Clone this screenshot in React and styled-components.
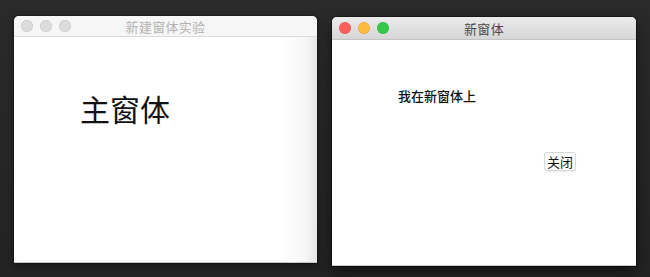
import React from 'react'
import styled, { createGlobalStyle } from 'styled-components'

const Global = createGlobalStyle`
    html, body {
        margin: 0;
        padding: 0;
        background: #262626;
        font-family: "Noto Sans CJK SC", "Liberation Sans", sans-serif;
    }
`

const Desktop = styled.div`
    display: flex;
    align-items: flex-start;
    gap: 15px;
    width: 650px;
    height: 277px;
    padding: 16px 0 0 14px;
    box-sizing: border-box;
    background: linear-gradient(180deg, #2a2a2a 0%, #232323 100%);
    overflow: hidden;
`

const Window = styled.div`
    display: flex;
    flex-direction: column;
    width: ${p => p.$w}px;
    height: ${p => p.$h}px;
    margin-top: ${p => p.$top || 0}px;
    border-radius: 5px 5px 0 0;
    overflow: hidden;
    background: #fff;
    box-shadow: ${p => p.$active
        ? '0 6px 14px rgba(0,0,0,0.55), 0 0 0 1px rgba(0,0,0,0.35)'
        : '0 3px 8px rgba(0,0,0,0.35), 0 0 0 1px rgba(0,0,0,0.25)'};
`

const TitleBar = styled.div`
    position: relative;
    display: flex;
    align-items: center;
    justify-content: center;
    height: ${p => p.$h}px;
    flex-shrink: 0;
    background: ${p => p.$active
        ? 'linear-gradient(180deg, #ebebeb 0%, #d6d6d6 100%)'
        : '#f6f6f6'};
    border-bottom: 1px solid ${p => p.$active ? '#c4c4c4' : '#dcdcdc'};
`

const Lights = styled.div`
    position: absolute;
    left: 7px;
    top: 0;
    bottom: 0;
    display: flex;
    align-items: center;
    gap: 7px;
`

const Light = styled.span`
    width: 12px;
    height: 12px;
    border-radius: 50%;
    background: ${p => p.$color};
    box-shadow: inset 0 0 0 0.5px rgba(0,0,0,0.12);
`

const Title = styled.span`
    font-size: 13px;
    color: ${p => p.$active ? '#4a4a4a' : '#b3b3b3'};
    letter-spacing: 0.3px;
`

const Content = styled.div`
    flex: 1;
    position: relative;
    padding: ${p => p.$pad};
    background: ${p => p.$inactive
        ? 'linear-gradient(90deg, #fff 0%, #fff 88%, #f7f7f7 96%, #e8e8e8 100%)'
        : '#fff'};
    border-bottom: 1px solid #c8c8c8;
`

const BigLabel = styled.div`
    font-size: 30px;
    line-height: 1;
    color: #111;
`

const Label = styled.div`
    font-size: 13px;
    font-weight: 500;
    line-height: 1;
    color: #111;
`

const ButtonRow = styled.div`
    display: flex;
    justify-content: flex-end;
    padding-right: 60px;
    margin-top: 50px;
`

const Button = styled.button`
    font-family: inherit;
    font-size: 13px;
    line-height: 15px;
    color: #111;
    background: #fff;
    border: 1px solid #d8d8d8;
    border-radius: 3px;
    padding: 1px 2px;
    box-shadow: 0 1px 1px rgba(0,0,0,0.08);
`

function App() {
    return (
        <>
            <Global />
            <Desktop>
                <Window $w={303} $h={247}>
                    <TitleBar $h={20}>
                        <Lights>
                            <Light $color="#dcdcdc" />
                            <Light $color="#dcdcdc" />
                            <Light $color="#dcdcdc" />
                        </Lights>
                        <Title>新建窗体实验</Title>
                    </TitleBar>
                    <Content $inactive $pad="56px 0 0 66px">
                        <BigLabel>主窗体</BigLabel>
                    </Content>
                </Window>
                <Window $w={304} $h={249} $top={1} $active>
                    <TitleBar $h={22} $active>
                        <Lights>
                            <Light $color="#fc605c" />
                            <Light $color="#fdbc40" />
                            <Light $color="#34c84a" />
                        </Lights>
                        <Title $active>新窗体</Title>
                    </TitleBar>
                    <Content $pad="49px 0 0 66px">
                        <Label>我在新窗体上</Label>
                        <ButtonRow>
                            <Button>关闭</Button>
                        </ButtonRow>
                    </Content>
                </Window>
            </Desktop>
        </>
    )
}

export default App
